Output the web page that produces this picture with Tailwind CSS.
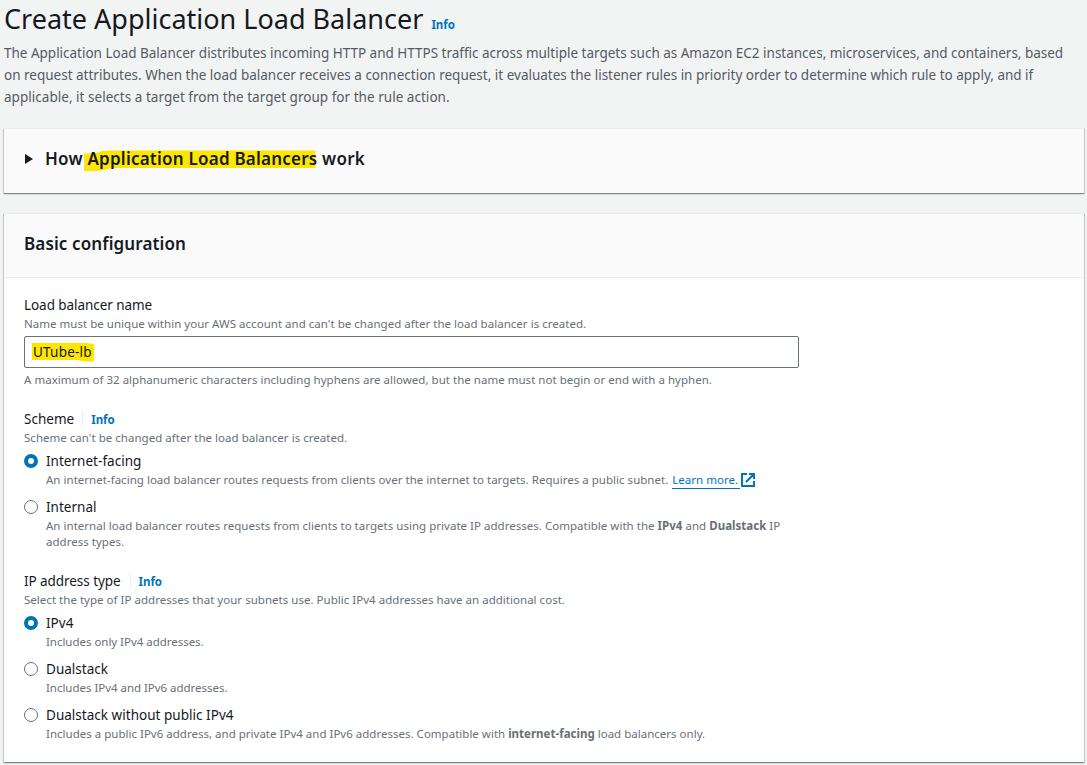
<!DOCTYPE html>
<html lang="en">
<head>
<meta charset="utf-8">
<title>Create Application Load Balancer</title>
<script src="https://cdn.jsdelivr.net/npm/@tailwindcss/browser@4"></script>
</head>
<body class="bg-[#f2f3f3] font-['Noto_Sans',sans-serif] text-[13.5px] leading-[22px] text-[#16191f] w-[1087px] h-[765px] overflow-hidden whitespace-nowrap">
<main class="flex flex-col pl-1 pr-[3px]">
  <header class="h-[128px] pt-px">
    <div class="flex items-baseline gap-2 h-[41px]">
      <h1 class="text-[27px] leading-[36px]"><span>Create Application Load Balancer</span></h1>
      <a class="text-[11.5px] font-bold text-[#0073bb]">Info</a>
    </div>
    <p class="text-[#545b64]"><span class="tracking-[-0.01px]">The Application Load Balancer distributes incoming HTTP and HTTPS traffic across multiple targets such as Amazon EC2 instances, microservices, and containers, based</span><br><span>on request attributes. When the load balancer receives a connection request, it evaluates the listener rules in priority order to determine which rule to apply, and if</span><br><span class="tracking-[0.03px]">applicable, it selects a target from the target group for the rule action.</span></p>
  </header>

  <section class="h-[65px] bg-[#fafafa] border-t border-[#eaeded] shadow-[0_1px_1px_0_rgba(0,28,36,.3),1px_1px_1px_0_rgba(0,28,36,.15),-1px_1px_1px_0_rgba(0,28,36,.15)] flex items-start pt-[19px] pl-5">
    <svg class="w-[10px] h-[22px] mr-[11px]" viewBox="0 0 10 22" fill="#16191f"><path d="M1 6 9 11 1 16z"/></svg>
    <h2 class="relative text-[17px] font-semibold tracking-[0.23px]">
      <svg class="absolute top-0 left-[39px] w-[233px] h-[26px]" viewBox="0 0 233 26" fill="#fde600"><path d="M0 5.500 12 5 18 3 24 2.500H231.500V20H28L20 22 14 23H0z"/></svg>
      <span class="relative">How Application Load Balancers work</span>
    </h2>
  </section>

  <section class="mt-5 h-[549px] bg-white border-t border-[#eaeded] shadow-[0_1px_1px_0_rgba(0,28,36,.3),1px_1px_1px_0_rgba(0,28,36,.15),-1px_1px_1px_0_rgba(0,28,36,.15)]">
    <h2 class="h-[64px] bg-[#fafafa] border-b border-[#eaeded] pl-5 pt-[19px] text-[17px] font-semibold tracking-[0.12px]"><span>Basic configuration</span></h2>
    <div class="px-5 pt-[16px] text-[11.5px] leading-[16px] tracking-[0.025px] text-[#687078]">
      <div>
        <div class="text-[13.5px] leading-[22px] tracking-[-0.06px] text-[#16191f]"><span>Load balancer name</span></div>
        <div><span>Name must be unique within your AWS account and can't be changed after the load balancer is created.</span></div>
        <div class="my-1 w-[775px] h-8 border border-[#687078] rounded-[2px] flex items-center px-2 text-[13.5px] leading-[22px] tracking-[0.2px] text-[#16191f]">
          <div class="relative">
            <svg class="absolute top-[2px] -left-px w-[64px] h-[20px]" viewBox="0 0 64 20" fill="#fde600"><path d="M0 0H54L62 1V18.500H52L46 17H0z"/></svg>
            <span class="relative">UTube-lb</span>
          </div>
        </div>
        <div><span>A maximum of 32 alphanumeric characters including hyphens are allowed, but the name must not begin or end with a hyphen.</span></div>
      </div>

      <div class="mt-5">
        <div class="flex items-center h-[22px]"><span class="text-[13.5px] text-[#16191f]">Scheme</span><i class="ml-2 mr-2 w-px h-4 bg-[#eaeded]"></i><a class="pt-px font-bold tracking-[-0.05px] text-[#0073bb]">Info</a></div>
        <div><span>Scheme can't be changed after the load balancer is created.</span></div>
        <div class="mt-1 flex gap-2">
          <svg class="w-[14px] h-[22px]" viewBox="0 0 14 22"><circle cx="7" cy="11" r="5" fill="#fff" stroke="#0073bb" stroke-width="4"/></svg>
          <div><div class="text-[13.5px] leading-[22px] text-[#16191f]"><span>Internet-facing</span></div>
          <div class="flex h-4"><span>An internet-facing load balancer routes requests from clients over the internet to targets. Requires a public subnet.</span><a class="ml-1 h-[17px] w-[68px] border-b border-[#0073bb] text-[#0073bb]">Learn more.</a><svg class="ml-px mt-px w-[14px] h-[14px]" viewBox="0 0 14 14" fill="none" stroke="#0073bb" stroke-width="2"><path d="M6 1H1V13H13V8M8 1H13V6M13 1 5 9"/></svg></div></div>
        </div>
        <div class="mt-2 flex gap-2">
          <svg class="w-[14px] h-[22px]" viewBox="0 0 14 22"><circle cx="7" cy="11" r="6.5" fill="#fff" stroke="#687078"/></svg>
          <div><div class="text-[13.5px] leading-[22px] text-[#16191f]"><span>Internal</span></div>
          <div><span>An internal load balancer routes requests from clients to targets using private IP addresses. Compatible with the <b>IPv4</b> and <b>Dualstack</b> IP</span><br><span>address types.</span></div></div>
        </div>
      </div>

      <div class="mt-5">
        <div class="flex items-center h-[22px]"><span class="text-[13.5px] tracking-[-0.06px] text-[#16191f]">IP address type</span><i class="ml-[9px] mr-2 w-px h-4 bg-[#eaeded]"></i><a class="pt-px font-bold tracking-[-0.05px] text-[#0073bb]">Info</a></div>
        <div><span>Select the type of IP addresses that your subnets use. Public IPv4 addresses have an additional cost.</span></div>
        <div class="mt-1 flex gap-2">
          <svg class="w-[14px] h-[22px]" viewBox="0 0 14 22"><circle cx="7" cy="11" r="5" fill="#fff" stroke="#0073bb" stroke-width="4"/></svg>
          <div><div class="text-[13.5px] leading-[22px] text-[#16191f]"><span>IPv4</span></div>
          <div><span class="tracking-[-0.03px]">Includes only IPv4 addresses.</span></div></div>
        </div>
        <div class="mt-2 flex gap-2">
          <svg class="w-[14px] h-[22px]" viewBox="0 0 14 22"><circle cx="7" cy="11" r="6.5" fill="#fff" stroke="#687078"/></svg>
          <div><div class="text-[13.5px] leading-[22px] text-[#16191f]"><span>Dualstack</span></div>
          <div><span class="tracking-[-0.03px]">Includes IPv4 and IPv6 addresses.</span></div></div>
        </div>
        <div class="mt-2 flex gap-2">
          <svg class="w-[14px] h-[22px]" viewBox="0 0 14 22"><circle cx="7" cy="11" r="6.5" fill="#fff" stroke="#687078"/></svg>
          <div><div class="text-[13.5px] leading-[22px] text-[#16191f]"><span>Dualstack without public IPv4</span></div>
          <div><span class="tracking-[0.01px]">Includes a public IPv6 address, and private IPv4 and IPv6 addresses. Compatible with <b>internet-facing</b> load balancers only.</span></div></div>
        </div>
      </div>
    </div>
  </section>
</main>
</body>
</html>
